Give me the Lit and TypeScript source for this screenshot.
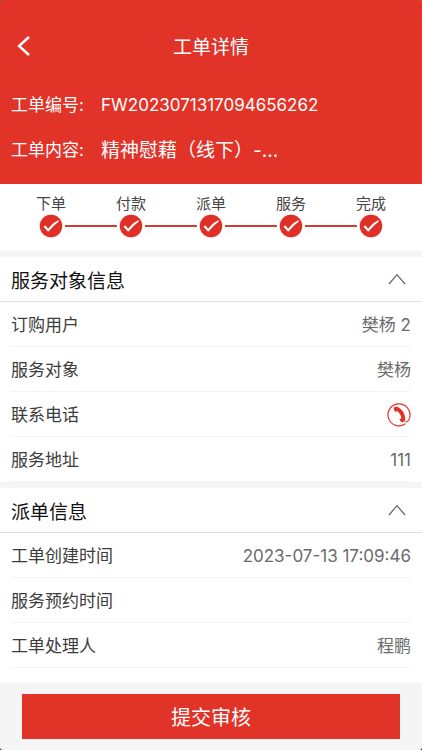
import { LitElement, html, css, svg, nothing } from "lit";
import { customElement, property, state } from "lit/decorators.js";

interface Field {
  label: string;
  value?: string;
  phone?: boolean;
}

const STEPS = ["下单", "付款", "派单", "服务", "完成"];

const CUSTOMER: Field[] = [
  { label: "订购用户", value: "樊杨 2" },
  { label: "服务对象", value: "樊杨" },
  { label: "联系电话", phone: true },
  { label: "服务地址", value: "111" },
];

const DISPATCH: Field[] = [
  { label: "工单创建时间", value: "2023-07-13 17:09:46" },
  { label: "服务预约时间", value: "" },
  { label: "工单处理人", value: "程鹏" },
];

const phoneIcon = svg`<svg width="24" height="24" viewBox="0 0 24 24" aria-hidden="true">
  <path d="M18.4 20.8A11 11 0 1 1 22.8 14C22.2 17.4 20.8 19 18.4 18.8" fill="none" stroke="#e23329" stroke-width="1.2"/>
  <path d="M6.6 4.4L9.6 3.4C14.4 5 18.8 10.4 18.2 17.6L15.8 19.4Q13.4 18.8 12.4 16.4L14.4 15.2C14 12.4 12.8 10.2 10.6 8.2L8.4 8.8Q6.4 7 6.6 4.4Z" fill="#e23329"/>
</svg>`;

@customElement("progress-steps")
export class ProgressSteps extends LitElement {
  static styles = css`
    :host { display: block; }
    .steps {
      display: flex;
      list-style: none;
      margin: 0;
      padding: 10px 11px 13px;
      background: #fff;
    }
    .step { flex: 1; }
    .label {
      display: block;
      text-align: center;
      font-size: 15px;
      line-height: 20px;
      color: #444;
    }
    .track { display: flex; align-items: center; gap: 2px; height: 24px; }
    .line { flex: 1; height: 2px; background: #d23a35; }
    .line.hidden { visibility: hidden; }
    .mark { display: block; }
  `;

  render() {
    return html`<ol class="steps">
      ${STEPS.map(
        (name, i) => html`<li class="step">
          <span class="label">${name}</span>
          <span class="track">
            <span class="line ${i === 0 ? "hidden" : ""}"></span>
            <svg class="mark" width="24" height="24" viewBox="0 0 24 24" aria-hidden="true">
              <circle cx="12" cy="12" r="12" fill="#fdeeed" />
              <circle cx="12" cy="12" r="11.2" fill="#e02f27" />
              <path d="M4.4 12.8L6.4 11.4L9.2 14.8Q13.4 9 19.2 6L19.8 7.4Q14 11.8 9.2 17.8Z" fill="#fff" />
            </svg>
            <span class="line ${i === STEPS.length - 1 ? "hidden" : ""}"></span>
          </span>
        </li>`
      )}
    </ol>`;
  }
}

@customElement("info-section")
export class InfoSection extends LitElement {
  @property() heading = "";
  @property({ attribute: false }) fields: Field[] = [];
  @state() private open = true;

  static styles = css`
    :host { display: block; background: #fff; }
    .heading { margin: 0; font-weight: 400; }
    .toggle {
      display: flex;
      align-items: center;
      justify-content: space-between;
      width: 100%;
      height: 45px;
      padding: 0 16px 0 11px;
      border: 0;
      border-bottom: 1px solid #dedede;
      background: none;
      font: inherit;
      font-size: 19px;
      color: #111;
      cursor: pointer;
    }
    .closed { transform: rotate(180deg); }
    .rows { margin: 0; padding: 0 11px; }
    .row {
      display: flex;
      align-items: center;
      justify-content: space-between;
      height: 45px;
      padding-top: 2px;
      box-sizing: border-box;
      border-bottom: 1px solid #f3f3f3;
      font-size: 17px;
      line-height: 24px;
    }
    .label { color: #3c3c3c; }
    .value { margin: 0; color: #6b6b6b; }
    .call {
      display: block;
      padding: 0;
      border: 0;
      background: none;
      cursor: pointer;
    }
    .call svg { display: block; }
  `;

  render() {
    return html`
      <h2 class="heading">
        <button class="toggle" aria-expanded=${this.open} @click=${() => (this.open = !this.open)}>
          ${this.heading}
          <svg class=${this.open ? "" : "closed"} width="18" height="12" viewBox="0 0 18 12" aria-hidden="true">
            <path d="M1 11L9 1.6L17 11" fill="none" stroke="#666" stroke-width="1.2" />
          </svg>
        </button>
      </h2>
      ${this.open
        ? html`<dl class="rows">
            ${this.fields.map(
              (f) => html`<div class="row">
                <dt class="label">${f.label}</dt>
                <dd class="value">
                  ${f.phone ? html`<button class="call" aria-label="联系电话">${phoneIcon}</button>` : f.value}
                </dd>
              </div>`
            )}
          </dl>`
        : nothing}
    `;
  }
}

@customElement("app-root")
export class AppRoot extends LitElement {
  static styles = css`
    :host {
      display: block;
      background: #333;
      font-family: Inter, "Noto Sans CJK SC", sans-serif;
    }
    .screen {
      display: flex;
      flex-direction: column;
      height: 100vh;
      overflow: hidden;
      border-radius: 3px;
      background: #f5f5f5;
    }
    .header {
      flex: none;
      padding: 28px 11px 16px;
      background: #e23329;
      color: #fff;
    }
    .bar {
      display: grid;
      grid-template-columns: 36px 1fr 36px;
      align-items: center;
      height: 36px;
      margin-bottom: 24px;
    }
    .back {
      display: flex;
      align-items: center;
      height: 36px;
      padding: 0 6px;
      border: 0;
      background: none;
      cursor: pointer;
    }
    .title {
      margin: 0;
      padding-top: 4px;
      text-align: center;
      font-size: 19px;
      line-height: 28px;
      font-weight: 400;
    }
    .summary {
      display: grid;
      grid-template-columns: 90px 1fr;
      row-gap: 10px;
      margin: 0;
    }
    .summary dt, .summary dd {
      margin: 0;
      font-size: 17px;
      line-height: 35px;
    }
    .summary .content { font-size: 19px; }
    .body {
      display: flex;
      flex-direction: column;
      gap: 6px;
      flex: 1;
      min-height: 0;
      overflow: hidden;
    }
    .last { flex: 1 0 auto; }
    .footer { flex: none; padding: 11px 22px; }
    .submit {
      display: block;
      width: 100%;
      height: 45px;
      border: 0;
      background: #e23329;
      color: #fff;
      font: inherit;
      font-size: 20px;
      cursor: pointer;
    }
  `;

  render() {
    return html`<div class="screen">
      <header class="header">
        <div class="bar">
          <button class="back" aria-label="返回">
            <svg width="14" height="20" viewBox="0 0 14 20" aria-hidden="true">
              <path d="M12 1L2 10L12 19" fill="none" stroke="#fff" stroke-width="2.4" />
            </svg>
          </button>
          <h1 class="title">工单详情</h1>
        </div>
        <dl class="summary">
          <dt>工单编号:</dt>
          <dd>FW2023071317094656262</dd>
          <dt>工单内容:</dt>
          <dd class="content">精神慰藉（线下）-...</dd>
        </dl>
      </header>
      <main class="body">
        <progress-steps></progress-steps>
        <info-section heading="服务对象信息" .fields=${CUSTOMER}></info-section>
        <info-section class="last" heading="派单信息" .fields=${DISPATCH}></info-section>
      </main>
      <footer class="footer">
        <button class="submit">提交审核</button>
      </footer>
    </div>`;
  }
}
